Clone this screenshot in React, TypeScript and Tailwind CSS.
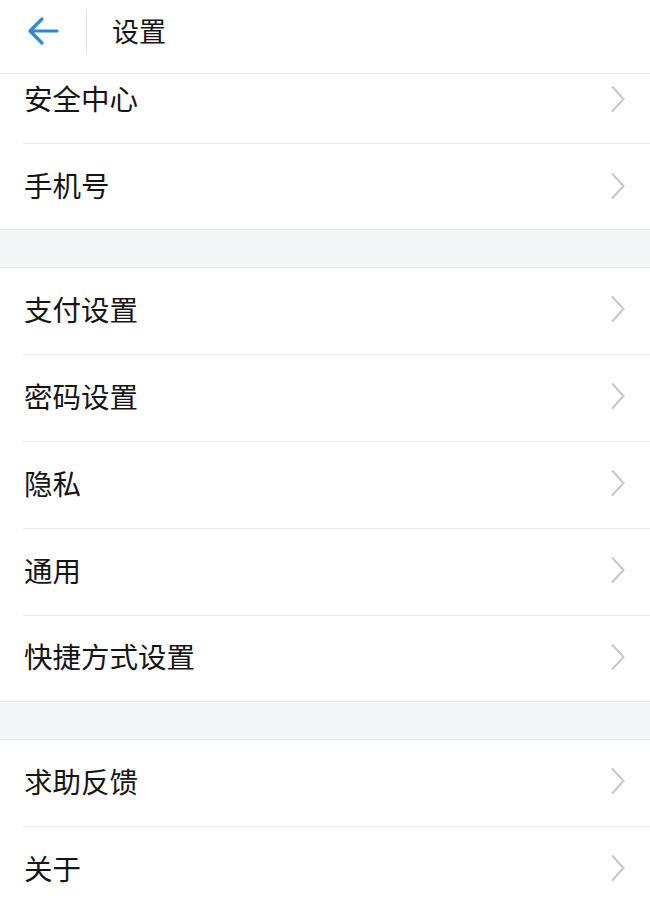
const font = { fontFamily: '"Noto Sans CJK SC", "Noto Sans", sans-serif' };

function Chevron() {
  return (
    <svg width="16" height="28" viewBox="0 0 16 28" fill="none" className="shrink-0">
      <path d="M2.5 2L13.5 14L2.5 26" stroke="#c8c8c8" strokeWidth="2" strokeLinecap="round" strokeLinejoin="round" />
    </svg>
  );
}

function Row({ label, box = 'h-[86px] pb-1', divider = true }: { label: string; box?: string; divider?: boolean }) {
  return (
    <div className="bg-white">
      <div className={`${box} flex items-center justify-between pl-6 pr-[24px]`}>
        <span className="text-[28.5px] leading-none text-[#151515]">{label}</span>
        <Chevron />
      </div>
      {divider && <div className="ml-[23px] h-px bg-[#ebebeb]" />}
    </div>
  );
}

function Gap() {
  return <div className="h-[39px] bg-[#f4f5f7] border-y border-[#e6e7e9]" />;
}

export default function App() {
  return (
    <div className="w-[650px] h-[905px] overflow-hidden bg-white" style={font}>
      <div className="h-[74px] pb-[12px] flex items-center border-b border-[#e8e8e8]">
        <div className="w-[86px] flex items-center pl-[27px]">
          <svg width="32" height="30" viewBox="0 0 32 30" fill="none">
            <path d="M30 15H4M15 3L3 15L15 27" stroke="#2a8ad6" strokeWidth="3.2" strokeLinecap="round" strokeLinejoin="round" />
          </svg>
        </div>
        <div className="w-px h-[42px] bg-[#e2e2e2]" />
        <span className="ml-[25px] text-[27px] leading-none text-[#151515]">设置</span>
      </div>
      <Row label="安全中心" box="h-[69px] pb-[20px]" />
      <Row label="手机号" box="h-[85px] pb-[2px]" divider={false} />
      <Gap />
      <Row label="支付设置" />
      <Row label="密码设置" />
      <Row label="隐私" />
      <Row label="通用" />
      <Row label="快捷方式设置" box="h-[85px] pb-1" divider={false} />
      <Gap />
      <Row label="求助反馈" />
      <Row label="关于" />
    </div>
  );
}
